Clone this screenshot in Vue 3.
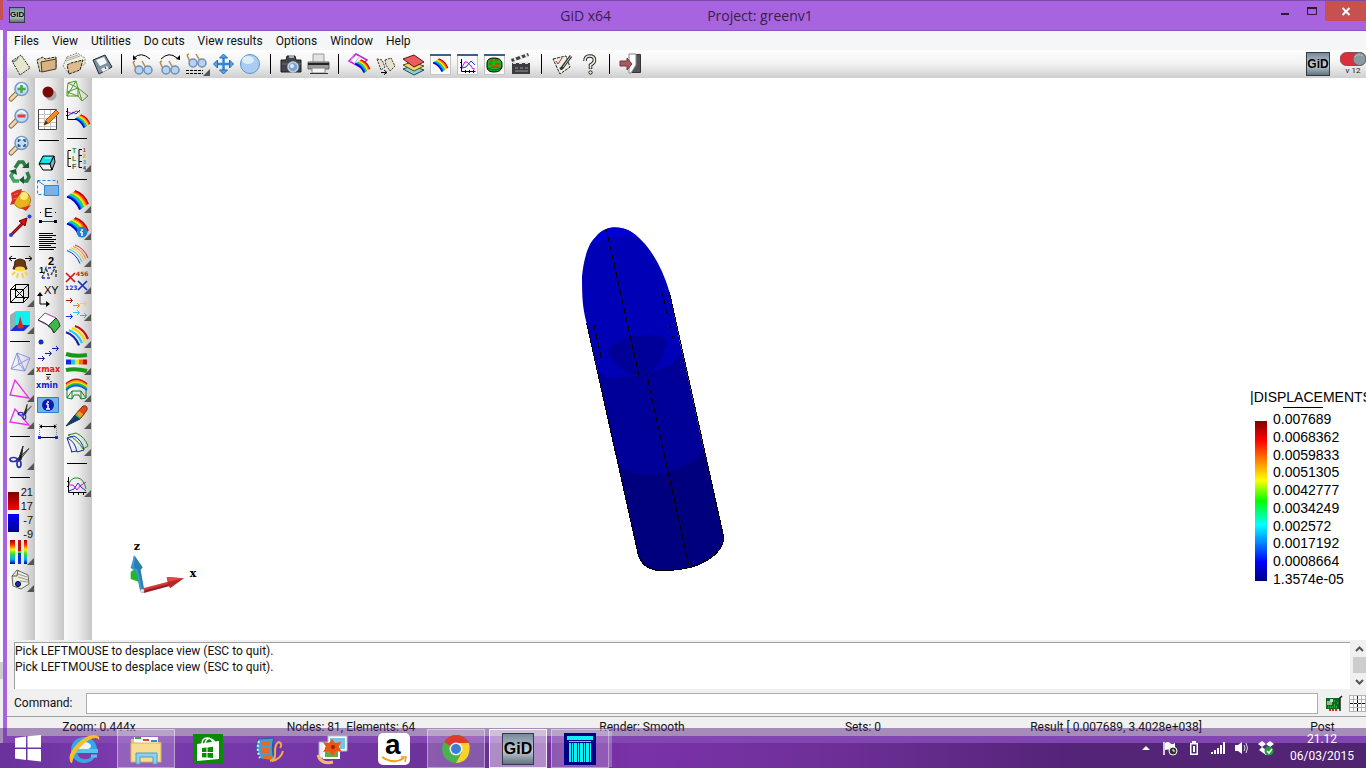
<template>
  <div class="desktop">
    <div class="behind">
      <span class="behind-close"></span>
      <span class="behind-page"></span>
      <span class="behind-scroll"></span>
      <span class="behind-foot"></span>
    </div>

    <main class="window">
      <header class="titlebar">
        <span class="app-icon">GiD</span>
        <h1 class="title"><span>GiD x64</span><span>Project: greenv1</span></h1>
        <div class="controls">
          <button type="button" aria-label="Minimize">
            <svg width="12" height="12"><path d="M2 8h8v2h-8z" fill="#2a1a38" /></svg>
          </button>
          <button type="button" aria-label="Maximize">
            <svg width="12" height="12"><path d="M1.500 3.500h9v6h-9z" fill="none" stroke="#2a1a38" /><path d="M1 2h10v2h-10z" fill="#2a1a38" /></svg>
          </button>
          <button type="button" class="close" aria-label="Close">
            <svg width="12" height="12"><path d="M2.500 3l7 7M9.500 3l-7 7" stroke="#fff" stroke-width="2" /></svg>
          </button>
        </div>
      </header>

      <nav class="menu">
        <a v-for="item in menu" :key="item" href="#">{{ item }}</a>
      </nav>

      <div class="toolbar" role="toolbar" aria-label="Standard">
        <template v-for="(tool, i) in standardTools" :key="i">
          <span v-if="tool === '|'" class="sep-v"></span>
          <button v-else type="button" class="tool" :aria-label="tool.name">
            <svg width="27" height="27" viewBox="0 0 27 27" v-html="tool.art"></svg>
          </button>
        </template>
        <span class="brand">GiD</span>
        <span class="version">
          <svg width="26" height="14" viewBox="0 0 26 14">
            <rect x="0" y="0.500" width="26" height="13" rx="6.500" fill="#dc2f3c" stroke="#8a4a50" />
            <circle cx="19.500" cy="7" r="6.500" fill="#8b989f" stroke="#5d686f" />
            <path d="M15 5q3-4 8-1" stroke="#b9c4ca" fill="none" />
          </svg>
          <small>v 12</small>
        </span>
      </div>

      <section class="workspace">
        <div v-for="(column, c) in sideTools" :key="c" class="side" :class="'side-' + c" role="toolbar">
          <template v-for="(tool, i) in column" :key="i">
            <span v-if="tool === '|'" class="sep-h"></span>
            <div v-else-if="tool === 'range'" class="range">
              <span class="range-bars"><i class="hot"></i><i class="cold"></i></span>
              <span class="range-values"><b>21</b><b>17</b><b>-7</b><b>-9</b></span>
            </div>
            <button v-else type="button" class="tool" :aria-label="tool.name">
              <svg width="27" height="27" viewBox="0 0 27 27" v-html="tool.art"></svg>
            </button>
          </template>
        </div>

        <div class="canvas">
          <svg class="model" width="190" height="370" viewBox="0 0 570 1110" shape-rendering="crispEdges">
            <defs>
              <clipPath id="body">
                <path d="M139 42C158 34 182 36 205 46C260 75 305 150 328 230L365 405L430 700L491 965C492 1010 440 1045 388 1058C340 1068 300 1068 285 1065C255 1058 240 1040 235 1020L175 750L110 455L80 325C68 280 66 250 66 185C70 140 82 90 104 70Q118 50 139 42Z" />
              </clipPath>
            </defs>
            <g clip-path="url(#body)">
              <path d="M0 0h570v1110h-570z" fill="#0000b6" />
              <path d="M90 92Q150 58 235 64L220 0H90z" fill="#0000d2" />
              <path d="M100 455Q130 490 165 490L175 486Q240 486 280 468L330 450Q362 425 366 400L570 500V1110H0V455z" fill="#000098" />
              <path d="M112 455Q140 470 172 490L160 476L205 484Q150 440 100 400z" fill="#0000b6" />
              <path d="M272 470Q300 440 325 430L366 404Q355 435 320 458L330 446z" fill="#0000b6" />
              <path d="M138 408C180 360 260 352 318 368C320 405 305 440 275 468C250 486 215 486 190 468Q155 440 138 408z" fill="#000098" />
              <path d="M170 745C200 782 280 790 330 770C380 750 425 735 430 695L570 700V1110H100z" fill="#00007e" />
            </g>
            <g fill="none" stroke="#000" stroke-width="3">
              <path d="M139 42L237 482M260 478L388 1058" />
              <path d="M100 322L124 430M307 233L320 290" />
              <path d="M320 290L338 370" stroke-dasharray="6 9" />
              <path d="M80 325L235 1020C240 1040 255 1058 285 1065Q340 1070 388 1058C440 1045 492 1010 491 965L328 230" />
            </g>
          </svg>

          <svg class="axes" width="110" height="75" viewBox="0 0 330 225">
            <path d="M62 125l14-8l14 40l-28-10z" fill="#23b52b" />
            <path d="M84 120l10 60" stroke="#2fae3a" stroke-width="7" />
            <path d="M73 76l-11 38l15 6l13 60l12-4l-10-56l6-8z" fill="#2a7fae" />
            <path d="M73 78l-5 38l12 4l14 58" stroke="#3f9fd0" stroke-width="5" fill="none" />
            <path d="M100 183L178 162" stroke="#9a1f22" stroke-width="12" />
            <path d="M100 178L178 158" stroke="#d9383b" stroke-width="7" />
            <path d="M170 141L222 145L180 175L174 162z" fill="#b8282b" />
            <path d="M170 141L222 145L176 155z" fill="#e2474a" />
            <circle cx="97" cy="182" r="6" fill="#e8e8e8" stroke="#555" />
            <text x="71" y="60" class="axis-name">z</text>
            <text x="239" y="140" class="axis-name">x</text>
          </svg>

          <div class="legend">
            <div class="legend-title">|DISPLACEMENTS|</div>
            <div class="legend-body">
              <span class="legend-bar"></span>
              <ul>
                <li v-for="value in legend" :key="value">{{ value }}</li>
              </ul>
            </div>
          </div>
        </div>
      </section>

      <section class="messages">
        <div class="log" role="log">
          <p>Pick LEFTMOUSE to desplace view (ESC to quit).</p>
          <p>Pick LEFTMOUSE to desplace view (ESC to quit).</p>
        </div>
        <div class="scroll">
          <button type="button" aria-label="Scroll up">
            <svg width="9" height="6"><path d="M1 5l3.500-3.500L8 5" fill="none" stroke="#555" stroke-width="2" /></svg>
          </button>
          <span class="thumb"></span>
          <button type="button" aria-label="Scroll down">
            <svg width="9" height="6"><path d="M1 1l3.500 3.500L8 1" fill="none" stroke="#555" stroke-width="2" /></svg>
          </button>
        </div>
      </section>

      <form class="command" @submit.prevent="command = ''">
        <label for="command">Command:</label>
        <input id="command" v-model="command" type="text" autocomplete="off">
        <svg width="17" height="17" viewBox="0 0 17 17">
          <path d="M0 3h14v11h-14z" fill="#0f6a1c" />
          <path d="M1 6h5v4h-5z" fill="#9ab59c" /><path d="M4 4h3v3h-3z" fill="#cfd8d0" />
          <path d="M8 6h2M11 8h2M8 10h2M2 12h10" stroke="#4be05a" stroke-dasharray="1 1" />
          <path d="M3 15h9" stroke="#d22" stroke-width="2" stroke-dasharray="2 1" />
          <path d="M14 2v14M14 3l2-2" stroke="#222" stroke-width="1.500" />
        </svg>
        <svg width="17" height="17" viewBox="0 0 17 17">
          <path d="M0 0h17v17h-17z" fill="#fff" />
          <path d="M0.500 0v17M4.500 0v17M12.500 0v17M16.500 0v17M0 0.500h17M0 4.500h17M0 12.500h17M0 16.500h17" stroke="#b4b4b4" />
          <path d="M8.500 1v15M1 8.500h15" stroke="#111" stroke-dasharray="3 1" />
        </svg>
      </form>

      <footer class="status">
        <span v-for="text in status" :key="text">{{ text }}</span>
      </footer>
    </main>

    <div class="taskbar">
      <button v-for="app in apps" :key="app.name" type="button" class="task" :class="app.state" :aria-label="app.name">
        <span v-if="app.name === 'GiD'" class="gid-icon">GiD</span>
        <svg v-else width="32" height="32" viewBox="0 0 32 32" v-html="app.art"></svg>
      </button>
      <div class="tray">
        <svg v-for="(icon, i) in tray" :key="i" width="16" height="16" viewBox="0 0 16 16" v-html="icon"></svg>
        <time class="clock"><span>21.12</span><span>06/03/2015</span></time>
      </div>
    </div>
  </div>
</template>

<script setup>
import { ref } from 'vue';

const command = ref('');

const menu = ['Files', 'View', 'Utilities', 'Do cuts', 'View results', 'Options', 'Window', 'Help'];
const legend = ['0.007689', '0.0068362', '0.0059833', '0.0051305', '0.0042777', '0.0034249', '0.002572', '0.0017192', '0.0008664', '1.3574e-05'];
const status = ['Zoom: 0.444x', 'Nodes: 81, Elements: 64', 'Render: Smooth', 'Sets: 0', 'Result [ 0.007689, 3.4028e+038]', 'Post'];

// Small corner mark of the tools that open a submenu
const more = '<path d="M20 26h7v-7z" fill="#555"/>';

const tool = (name, art, hasMore = false) => ({ name, art: hasMore ? art + more : art });

// Curved contour bands, from the outer colour to the inner one
const bands = (colors, step, width) => colors.map((color, i) => {
  const d = i * step;
  return `<path d="M${11 - d} ${4 + d * 0.7}q9 3 13 13" fill="none" stroke="${color}" stroke-width="${width}"/>`;
}).join('');
const rainbow = bands(['#c00000', '#ff2a00', '#ff9c00', '#f8f000', '#30d030', '#00c8e8', '#0060ff', '#0000c0'], 1.15, 1.9);
const smallRainbow = (x, y, s) => `<g transform="translate(${x} ${y}) scale(${s})">${rainbow}</g>`;

const lens = (sign) => `<path d="M10 15l-6 6" stroke="#8d6a42" stroke-width="5" stroke-linecap="round"/><path d="M10 15l-6 6" stroke="#f0d7ae" stroke-width="3" stroke-linecap="round"/><circle cx="14.500" cy="11" r="6.500" fill="#c3dcf5" stroke="#6f9ccb" stroke-width="1.500"/><path d="M10.500 9q4-6 8 0" stroke="#eef7ff" stroke-width="2" fill="none"/>${sign}`;

const glasses = '<path d="M4 12l3 7M13 11l4 7M4 12l2-1" stroke="#b58a4c" stroke-width="1.500" fill="none"/><circle cx="10" cy="20" r="4" fill="#b9d3ef" stroke="#6d8fb8" stroke-width="1.500"/><circle cx="19" cy="20" r="4" fill="#b9d3ef" stroke="#6d8fb8" stroke-width="1.500"/>';
const frame = '<path d="M3.500 4.500h20v20h-20z" fill="#fafafa" stroke="#c4c4c4"/><path d="M3 4h21v2h-21z" fill="#3c6288"/>';
const plot = '<path d="M7.500 9v12.500h14M6 12.500h2M6 17.500h2M11.500 20v3M15.500 20v3M19.500 20v3" stroke="#000" fill="none"/><path d="M8 17l3-5h2l4 4l2 3h2" stroke="#e000e0" fill="none"/><path d="M8 18l4-1l5-6l4 4" stroke="#2038e0" fill="none"/>';
const scissors = '<path d="M10 15L22 4.500L12 17z" fill="#999" stroke="#444"/><path d="M11 17L16 2L14 16z" fill="#222" stroke="#222"/><ellipse cx="6.500" cy="15.500" rx="3.500" ry="2" fill="none" stroke="#3030a8" stroke-width="1.700"/><ellipse cx="12" cy="20" rx="2" ry="3.300" fill="none" stroke="#3030a8" stroke-width="1.700"/>';

const standardTools = [
  tool('New', '<path d="M5 11l9-6l9 13l-10 7z" fill="#e6e6cc" stroke="#222" stroke-dasharray="2 1"/><path d="M5 11q4 2 6-4" stroke="#555" fill="none"/>'),
  tool('Open', '<path d="M3 10l6-3l2 2l11-2v11l-16 4z" fill="#e0d6b0" stroke="#222" stroke-dasharray="3 1"/><path d="M7 12l15-3v10l-14 3z" fill="#d8b483" stroke="#4b3920"/>'),
  tool('Import', '<path d="M6 7l10-4l8 5v6l-16 10l-6-8z" fill="#f2f2e0" stroke="#888" stroke-dasharray="2 1"/><path d="M5 9l12-4M5 11l14-5" stroke="#aaa"/><path d="M6 15l4-2l12-3l-3 10l-11 4z" fill="#dcbb8c" stroke="#222" stroke-dasharray="3 1"/>'),
  tool('Save', '<path d="M5 10l12-5l7 12l-13 7z" fill="#7d929f" stroke="#1e2830"/><path d="M8 10l8-3l3 6l-7 3z" fill="#f8fbfc"/><path d="M13 19l6-3l2 3l-6 3z" fill="#eef3f5"/><path d="M17 17l1 2" stroke="#222"/>'),
  '|',
  tool('Previous view', glasses + '<path d="M5 8q7-7 16 1" stroke="#000" fill="none"/><path d="M4 10v-5l4 4z"/>'),
  tool('Next view', glasses + '<path d="M5 9q8-8 16-1" stroke="#000" fill="none"/><path d="M24 10v-5l-4 4z"/>'),
  tool('View list', '<g transform="translate(0 -7)">' + glasses + '</g><path d="M3 20.500h17M3 23.500h17" stroke="#000" stroke-dasharray="3 1"/>', true),
  tool('Pan', '<path d="M13.500 6v16M5 14h17" stroke="#2f86dc" stroke-width="2.500"/><path d="M9.500 8l4-4l4 4zM9.500 20l4 4l4-4zM7.500 10l-4 4l4 4zM19.500 10l4 4l-4 4z" fill="#57a4ea" stroke="#1d6cbb"/>'),
  tool('Sphere', '<circle cx="13" cy="14" r="9.500" fill="#a9cdf2" stroke="#6093c8"/><ellipse cx="11" cy="10" rx="6" ry="4" fill="#dcecfb"/>'),
  '|',
  tool('Snapshot', '<path d="M3 10h5l1-4h8l1 4h5v12h-20z" fill="#42464c" stroke="#1b1d20"/><path d="M11 5h5v3h-5z" fill="#a8adb2"/><path d="M4 14h19" stroke="#6c7278"/><circle cx="15" cy="17" r="5" fill="#7aa5d4" stroke="#c8d2dc" stroke-width="1.500"/><circle cx="14" cy="16" r="2" fill="#d8ebff"/>'),
  tool('Print', '<path d="M8 4h11v9h-11z" fill="#e2e2e2" stroke="#999"/><path d="M3 12h21v7h-21z" fill="#9a9a9a" stroke="#666"/><path d="M3 14h21" stroke="#222" stroke-width="2"/><path d="M7 18h13v5h-13z" fill="#f5f5f5" stroke="#888"/><path d="M5 23.500h18" stroke="#333"/>'),
  '|',
  tool('Postprocess', '<path d="M3 11l7-7l11 6l-7 7z" fill="#fff" stroke="#c020d0" stroke-width="1.500"/><path d="M8 4l-4 8M14 6l-6 8" stroke="#f080e0"/>' + smallRainbow(7, 7, 0.7)),
  tool('Sets', '<path d="M4 9l5 1l3 7l-4 3zM12 10l6-2l4 8l-5 5l-4-6z" fill="#e6e0cc" stroke="#333" stroke-dasharray="2 1"/><path d="M8 22.500h5M11 20l3 2.500l-3 2" stroke="#000" fill="none"/>'),
  tool('Layers', '<path d="M3 19l9-3l12 4l-10 5z" fill="#7fd6e2" stroke="#174a52"/><path d="M3 15l9-3l12 4l-10 5z" fill="#f2d36a" stroke="#5b4a10"/><path d="M3 9l11-4l10 7l-10 5z" fill="#ea5c60" stroke="#5c1416"/>'),
  tool('Results window', frame + smallRainbow(4, 6, 0.7)),
  tool('Graphs window', frame + plot),
  tool('Contour window', frame + '<path d="M6 13q0-5 7-5t8 5v4q-1 5-8 5t-7-5z" fill="#18b818" stroke="#000"/><path d="M9 11h3M14 10h3M8 14h3M14 14h5M10 17h8" stroke="#c83800" stroke-width="1.500"/><path d="M7 18q7 4 13 0" stroke="#053" fill="none"/>'),
  tool('Animate', '<path d="M4 13h18v11h-18z" fill="#3b3b40"/><path d="M3 9l17-6l1 3l-17 6z" fill="#404046"/><path d="M6 7l2 4M12 5l2 4M17 3l2 4" stroke="#eee" stroke-width="2"/><path d="M5 13h17" stroke="#ddd" stroke-width="2" stroke-dasharray="3 3"/><path d="M7 18h3M12 18h3M17 18h3M7 21h13" stroke="#999"/>'),
  '|',
  tool('Preferences', '<path d="M4 9l13-3l4 11l-10 7z" fill="#efefe6" stroke="#222" stroke-dasharray="3 1"/><path d="M7 11l2 3l4-6" stroke="#b03030" fill="none"/><path d="M22 6l-9 12l-2 1" stroke="#333" stroke-width="3" fill="none"/><path d="M22 6l-8 11" stroke="#d8cdb8"/>'),
  tool('Help', '<path d="M9 11q0-5 4.500-5q5 0 5 4q0 3-4 5v4" stroke="#222" stroke-width="3.500" fill="none"/><path d="M9 11q0-5 4.500-5q5 0 5 4q0 3-4 5v3.500" stroke="#ecefdc" stroke-width="1.700" fill="none"/><circle cx="14.500" cy="22.500" r="1.700" fill="#ecefdc" stroke="#222"/>'),
  '|',
  tool('Exit', '<path d="M12.500 4.500h11v18h-11z" fill="#555" stroke="#333"/><path d="M12 4h7v11l-5 8h-2z" fill="#fff" stroke="#888"/><path d="M3 11h7v-3l5 6l-5 6v-4h-7z" fill="#a85a5e" stroke="#6d3a3d"/>'),
];

const sideTools = [
  [
    tool('Zoom in', lens('<path d="M10.500 11h8M14.500 7v8" stroke="#4aa54a" stroke-width="2.500"/>')),
    tool('Zoom out', lens('<path d="M10.500 11h8" stroke="#e03c3c" stroke-width="3"/>')),
    tool('Zoom frame', lens('<path d="M11.500 10v-2h2M16 8h2v2M18 12v2h-2M13.500 14h-2v-2" stroke="#2c4c74" stroke-width="1.500" fill="none"/>')),
    tool('Redraw', '<path d="M8 9l4-6h4l3 5" fill="none" stroke="#2f7d4a" stroke-width="3.500"/><path d="M15 9h7v-6z" fill="#1c5a32"/><path d="M6 13l-2 4l3 5h5" fill="none" stroke="#46a366" stroke-width="3.500"/><path d="M2 12l7-2l1 6z" fill="#1c5a32"/><path d="M20 13l2 5l-2 4h-4" fill="none" stroke="#2f7d4a" stroke-width="3.500"/><path d="M17 17v8l-5-4z" fill="#1c5a32"/>'),
    tool('Render', '<circle cx="15" cy="14" r="8.500" fill="#e8b41e" stroke="#a8790d"/><circle cx="17" cy="10" r="4" fill="#fae97a"/><path d="M4 7l6-3l5-1l-1 4l-3 4l-2 3l-2 4l-4 1l2-5z" fill="#d83020"/><path d="M14 22l10-3l-5 6z" fill="#d83020"/><path d="M7 9l4-2M6 13l4-1" stroke="#f07050"/>'),
    tool('Rotate', '<path d="M4 22L18 8" stroke="#8b0000" stroke-width="3"/><path d="M4 22L18 8" stroke="#e01818"/><path d="M12 8l8-3l-2 8z" fill="#d81010" stroke="#700"/><circle cx="4" cy="22" r="2" fill="#2040e0"/><circle cx="22.500" cy="3.500" r="2" fill="#2040e0"/>'),
    '|',
    tool('Light', '<path d="M2 4.500h7M18 4.500h6M5 2l-3 2.500l3 2.500M22 2l3 2.500l-3 2.500" stroke="#000" fill="none"/><path d="M6 15q2-4 2-8q5-4 10 0q0 4 2 8z" fill="#6b3a14" stroke="#3d1f08"/><ellipse cx="13" cy="15" rx="5" ry="2.500" fill="#ffd84c"/><path d="M8 18l-3 3M11 19l-1 5M15 19l1 5M18 18l3 3" stroke="#f2d24a" stroke-width="2"/>'),
    tool('Perspective', '<path d="M3.500 8.500h13v13h-13zM8.500 3.500h13v13h-13zM3.500 8.500l5-5M16.500 8.500l5-5M3.500 21.500l5-5M16.500 21.500l5-5M7 7l11 11M18 7L7 18" fill="none" stroke="#000"/>', true),
    tool('Clip planes', '<path d="M9 3h14v14h-14z" fill="#14f0f0"/><path d="M3 7l6-4v14l-6 6z" fill="#8fb4b8"/><path d="M3 23l6-6h14l-6 6z" fill="#1b2fe0"/><path d="M13 8l2 7l2 4q-3 3-7 0l2-5z" fill="#e02020"/>', true),
    '|',
    tool('Volume mesh', '<path d="M10 4L4 20L18 22L23 9ZM10 4L18 22M4 20L12 15L23 9M10 4L12 15L18 22" fill="none" stroke="#8d94e4"/>', true),
    tool('Surface mesh', '<path d="M8 4L3 19L22 22z" fill="none" stroke="#f02ce8" stroke-width="1.300"/>', true),
    tool('Cut mesh', '<path d="M8 6L3 19L22 22z" fill="none" stroke="#f02ce8" stroke-width="1.300"/><g transform="translate(9 0) scale(0.7)">' + scissors + '</g>', true),
    '|',
    tool('Cut', scissors, true),
    '|',
    'range',
    tool('Colour scale', '<defs><linearGradient id="jet" x1="0" x2="0" y1="0" y2="1"><stop offset="0" stop-color="#a00000"/><stop offset=".2" stop-color="#ff3000"/><stop offset=".4" stop-color="#f8f000"/><stop offset=".6" stop-color="#20e040"/><stop offset=".8" stop-color="#00b0ff"/><stop offset="1" stop-color="#0000b0"/></linearGradient></defs><path d="M3 1h5v24h-5zM17 1h3v24h-3z" fill="url(#jet)"/><path d="M11 1h3v11h-3z" fill="#c01000"/><path d="M11 12h3v2h-3z" fill="#20e040"/><path d="M11 14h3v11h-3z" fill="#0030d0"/>', true),
    tool('Notes', '<path d="M5 10l5-6l11 5l1 9l-8 5l-8-3z" fill="#eeeedc" stroke="#666"/><path d="M11 8l9 3M11 11l10 3M13 15l8 1" stroke="#999"/><path d="M5 10l5 0l1-6" fill="none" stroke="#555"/><circle cx="11" cy="18" r="2.500" fill="#1030e0" stroke="#000"/>', true),
  ],
  [
    tool('Record', '<circle cx="15" cy="15" r="5.500" fill="#aaa"/><circle cx="12" cy="12" r="5.500" fill="#760808"/>'),
    tool('Edit table', '<path d="M2.500 2.500h18v20h-18z" fill="#fff" stroke="#444"/><path d="M3 7.500h17M3 11.500h17M3 15.500h17M3 19.500h17M8.500 3v19M14.500 3v19" stroke="#c4c4c4"/><path d="M8 18l2-5L20 3l3 3L13 16z" fill="#f08c24" stroke="#a65a10"/><path d="M8 18l2-4l2 2z" fill="#222"/>'),
    '|',
    tool('Erase', '<path d="M7 8h11l-4 8h-11z" fill="#16e0ec" stroke="#000"/><path d="M3 16l4 6h9l-2-6z" fill="#e8f4f4" stroke="#000"/><path d="M14 16l4-8l1 6l-3 8z" fill="#8ab0b4" stroke="#000"/><path d="M9 10h6" stroke="#9ff"/>'),
    tool('Select area', '<path d="M1.500 5.500h20v14h-20z" fill="none" stroke="#2f86d6" stroke-dasharray="3 2"/><path d="M8.500 10.500h14v10h-14z" fill="#7ab2e4" stroke="#2f86d6"/><path d="M2 6l6 4" stroke="#2f86d6"/>'),
    tool('Label element', '<text x="8" y="15" font-family="Liberation Sans" font-size="13">E</text><path d="M4 19.500h16" stroke="#1430e0"/><path d="M3 18h3v3h-3zM18 18h3v3h-3zM4 10h1v1h-1zM19 10h1v1h-1z"/>'),
    tool('List', '<path d="M3 4.500h14M3 6.500h17M3 8.500h13M3 10.500h17M3 12.500h15M3 14.500h17M3 16.500h12M3 18.500h17M3 20.500h15" stroke="#000"/>'),
    tool('Node numbers', '<text x="12" y="9" font-family="Liberation Sans" font-weight="bold" font-size="11">2</text><text x="3" y="17" font-family="Liberation Sans" font-weight="bold" font-size="9">1</text><path d="M6 22l4-10l3 9M15 19l4-7M20 21v-8" stroke="#444" fill="none" stroke-dasharray="3 1" stroke-width="1.500"/><path d="M6 22h8M12 12l9-1" stroke="#1430e0" stroke-dasharray="3 2" stroke-width="1.500"/>'),
    tool('Coordinates', '<text x="8" y="11" font-family="Liberation Sans" font-size="11">XY</text><path d="M4 12v9h8" stroke="#000" fill="none"/><path d="M1 13l3-4l3 4zM10 18l4 3l-4 3z"/>'),
    tool('Surface', '<path d="M2 10L9 3l11 5l-7 8z" fill="#fff" stroke="#c020c0"/><path d="M12 16l8-8q3 3 4 8l-6 7q-2-6-6-7z" fill="#38b848" stroke="#333"/><path d="M2 10q8 3 11 6q3 3 5 7" stroke="#333" fill="none"/>'),
    tool('Send to point', '<circle cx="5" cy="5" r="2.500" fill="#1430c0"/><path d="M2 21.500h6M6 19l2.500 2.500l-2.500 2.500M9 16.500h6M13 14l2.500 2.500l-2.500 2.500M16 11.500h6M20 9l2.500 2.500l-2.500 2.500" stroke="#102090" fill="none"/>'),
    tool('Extremes', '<g font-family="DejaVu Sans" font-size="8" font-weight="bold"><text x="0" y="8" fill="#e01818">xmax</text><text x="10" y="16" font-size="7" font-weight="normal">x</text><text x="0" y="24" fill="#1420d0">xmin</text></g><path d="M10 10.500h5" stroke="#000"/>'),
    tool('Information', '<path d="M1.500 6.500h21v15h-21z" fill="#74b0ea" stroke="#2e7fd0"/><circle cx="12" cy="14" r="6" fill="#0c1cb0"/><path d="M12 10v2M12 13v5M10 18h4M10 13h2" stroke="#fff" stroke-width="1.500"/>'),
    tool('Distance', '<path d="M3 8.500h18" stroke="#000"/><path d="M3 8.500l3-2v4zM21 8.500l-3-2v4z"/><path d="M3 19.500h18" stroke="#000"/><path d="M2 18h3v3h-3zM19 18h3v3h-3z" fill="#1430c0"/><path d="M3.500 6v12M20.500 6v12" stroke="#888" stroke-dasharray="1 1"/>'),
  ],
  [
    tool('Mesh', '<path d="M3 14L4 5L12 3L14 10L24 18L18 23L14 18L3 18ZM3 14L14 10L14 18ZM4 5L14 10M3 18L12 3M14 10L18 23" fill="none" stroke="#4f9a28"/>'),
    tool('Result graph', '<path d="M3.500 3v11.500h10M2 6.500h2M2 10.500h2" stroke="#000" fill="none"/><path d="M4 7l4 2l4-3l4 1" stroke="#e000c0" fill="none"/><path d="M4 11l5-4l3 2l4-4" stroke="#2030d0" fill="none"/>' + smallRainbow(9, 7, 0.7)),
    '|',
    tool('Labels tree', '<path d="M7 4.500h-3v16h3M4 12.500h3M18 3.500h-3v18h3M15 9.500h3M15 15.500h3" stroke="#000" fill="none"/><g font-family="Liberation Sans" font-weight="bold" font-size="7"><text x="8" y="7" fill="#20a020">T</text><text x="8" y="15" fill="#20a020">L</text><text x="8" y="23" fill="#555">F</text></g><g font-family="Liberation Sans" font-weight="bold" font-size="5"><text x="19" y="6" fill="#b02020">1</text><text x="19" y="12" fill="#c8a010">2</text><text x="19" y="18" fill="#10a8c8">3</text><text x="19" y="24" fill="#1020a0">4</text></g>', true),
    '|',
    tool('Contour fill', rainbow, true),
    tool('Contour info', rainbow + '<circle cx="18" cy="18" r="5.500" fill="#2080d8"/><path d="M18 15v2M18 18v4M16 18h2" stroke="#fff" stroke-width="1.500"/>', true),
    tool('Contour lines', bands(['#d02020', '#f08020', '#f0c020', '#30c0e0', '#2030c0'], 2, 1), true),
    tool('Min and max', '<path d="M2 5l9 9M11 5l-9 9" stroke="#d01818" stroke-width="1.700"/><path d="M14 13l9 9M23 13l-9 9" stroke="#1830c8" stroke-width="1.700"/><g font-family="DejaVu Sans" font-size="6" font-weight="bold"><text x="12" y="8" fill="#d01818">456</text><text x="1" y="22" fill="#1830c8">123</text></g>', true),
    tool('Vectors', '<g fill="none"><path d="M2 5.500h6M6 3l2.500 2.500l-2.500 2.500" stroke="#901818"/><path d="M9 10.500h6M13 8l2.500 2.500l-2.500 2.500" stroke="#f08010"/><path d="M16 8.500h7M20 6l2.500 2.500l-2.500 2.500" stroke="#f0d820"/><path d="M2 21.500h6M6 19l2.500 2.500l-2.500 2.500" stroke="#1830c8"/><path d="M9 17.500h6M13 15l2.500 2.500l-2.500 2.500" stroke="#18d0f0"/><path d="M16 20.500h7M20 18l2.500 2.500l-2.500 2.500" stroke="#20e020"/></g>', true),
    tool('Isosurfaces', bands(['#c01010', '#ffd800', '#20c8f0', '#1020a0'], 3, 2.2), true),
    tool('Stream lines', '<path d="M2 5q10 3 21 1M2 21q10-2 21 1" stroke="#189818" stroke-width="4" fill="none"/><path d="M2 13h5" stroke="#1028e0" stroke-width="5"/><path d="M7 13h4" stroke="#20c8f0" stroke-width="5"/><path d="M11 13h4" stroke="#f0e020" stroke-width="5"/><path d="M15 13h4" stroke="#f07010" stroke-width="5"/><path d="M19 13h4" stroke="#c01010" stroke-width="5"/>', true),
    tool('Deformation', '<g fill="none" stroke-width="1.700"><path d="M2 8q10-9 21 0" stroke="#d01010"/><path d="M2 9.500q10-9 21 0" stroke="#f89010"/><path d="M2 11q10-9 21 0" stroke="#e8e010"/><path d="M2 12.500q10-9 21 0" stroke="#20c840"/><path d="M2 14q10-9 21 0" stroke="#1060f0"/></g><path d="M3 14v8l5 1l2-4h5l2 4l5-1v-8M3 22l5-7h9l5 7M8 15v8M17 15v8" stroke="#108020" fill="none"/>', true),
    tool('Line diagram', '<path d="M2 23L11 12l5 4z" fill="#183a70" stroke="#103050"/><path d="M11 12l5-5l5 4l-5 5z" fill="#38c040"/><path d="M13 9l6-6q5-1 4 4l-4 6z" fill="#e84818"/><path d="M12 11l3-3l5 4l-3 3z" fill="#e8a020"/><path d="M11 12l8-9q5-1 4 4l-7 9" fill="none" stroke="#7a3010"/>', true),
    tool('Results surface', '<path d="M4 5l8-2q9 4 12 13l-5 3q-5-9-15-14z" fill="none" stroke="#189018"/><path d="M3 8q8 3 10 14l7-2q-2-10-10-14zM7 22l6-1M3 8l5 14" fill="none" stroke="#1828b0"/>', true),
    '|',
    tool('Graphs', '<path d="M4.500 6v15.500h18M3 10.500h2M3 15.500h2M9.500 21v3M14.500 21v3M19.500 21v3" stroke="#000" fill="none"/><path d="M5 13q2-7 9-6q6 1 8 11" stroke="#189018" fill="none"/><path d="M5 14h4l4 5l3-4l6-4" stroke="#e000d0" fill="none"/><path d="M5 20l5-2l4-6l3 4l5 4" stroke="#2030e0" fill="none"/>', true),
  ],
];

const apps = [
  { name: 'Start', state: 'start', art: '<path d="M3 5l11-1.500v11H3zM15.500 3.200L29 2v12.500H15.500zM3 16h11v11L3 25.500zM15.500 16H29v12.500l-13.500-1.500z" fill="#fff"/>' },
  { name: 'Internet Explorer', art: '<ellipse cx="16" cy="17" rx="13" ry="13" fill="#36a7e6"/><ellipse cx="16" cy="13" rx="7" ry="4" fill="#e8f6ff"/><path d="M9 19h22q0 3-1 5h-7q-3 3-8 2q-5-1-6-7z" fill="#7a3fa5"/><path d="M8 18h22" stroke="#54c4f4" stroke-width="4"/><path d="M23 23h6" stroke="#54c4f4" stroke-width="3"/><path d="M3 30Q-2 22 10 10Q22-1 30 3q2 1 1 4q-2-4-10 0Q7 15 4 30z" fill="#f4bf28"/>' },
  { name: 'File Explorer', state: 'open', art: '<path d="M1 6h10l2 3h18v20h-30z" fill="#e4c468"/><path d="M4 4h24v12h-24z" fill="#fff"/><path d="M5 4h6v2h-6z" fill="#38a838"/><path d="M13 6h6v2h-6z" fill="#d84838"/><path d="M21 7h6v2h-6z" fill="#3888d8"/><path d="M1 10h30v19h-30z" fill="#f6dd91" stroke="#d8b760"/><path d="M6 31v-11h21v11h-4v-7h-13v7z" fill="#8ed0ee" stroke="#4f9ec8"/>' },
  { name: 'Store', art: '<path d="M1 1h30v30h-30z" fill="#0a8a06"/><path d="M5 11l22-3v18l-22 2z" fill="#fff"/><path d="M10 11q0-6 5-6q5 0 6 5M13 10q2-7 8-3l2 2" stroke="#fff" stroke-width="1.500" fill="none"/><path d="M10 15l4.500-.5v4.500h-4.500zM15.500 14.400l5.500-.6v5.200h-5.500zM10 20h4.500v4.500l-4.500-.3zM15.500 20h5.500v5l-5.500-.4z" fill="#0a8a06"/>' },
  { name: 'Movie Maker', art: '<path d="M4 6l16-1q-4 11 1 23l-14-2q-7-10-3-20z" fill="#4b9ad8" stroke="#235d94"/><path d="M8 8h8v5h-8zM7 15h8v5h-8zM9 22h8v4h-8z" fill="#e86a1e"/><path d="M5 8q-3 8 1 17" stroke="#d8efff" stroke-width="2" stroke-dasharray="2 2" fill="none"/><path d="M16 28q6-1 5-9q0-9 4-10q4 2 1 6M18 28q9-2 11-10" fill="none" stroke="#f3aa4c" stroke-width="2"/>' },
  { name: 'Photo Gallery', art: '<path d="M3 9h18v16h-18z" fill="#e8f0f4" stroke="#aab"/><path d="M12 3h19v15h-19z" fill="#fff" stroke="#bbc"/><path d="M14 5h15v11h-15z" fill="#77c3e6"/><path d="M7 12h17v14h-17z" fill="#fff"/><path d="M9 14h13v10h-13z" fill="#66aa50"/><path d="M16 6l3 4l6-1l-2 5l3 5l-6-1l-3 5l-4-5l-6 1l3-5l-3-5l6 1z" fill="#ee5510"/><circle cx="17" cy="14" r="2" fill="#8a2a00"/><path d="M2 22q3 10 15 7" stroke="#f3bb65" stroke-width="3" fill="none"/>' },
  { name: 'Amazon', art: '<rect x="0" y="0" width="32" height="32" rx="5" fill="#fff"/><text x="7" y="21" font-family="Liberation Sans" font-size="28" font-weight="bold">a</text><path d="M4 24q12 8 22 1" stroke="#f59a16" stroke-width="2" fill="none"/><path d="M23 24h5l-1 5" stroke="#f59a16" stroke-width="1.500" fill="none"/>' },
  { name: 'Chrome', state: 'open', art: '<circle cx="16" cy="16" r="14" fill="#4caf50"/><path d="M16 16L4 9Q8 2 16 2Q25 2 29 10H16z" fill="#e0382c"/><path d="M16 30Q30 29 29.500 13Q29 11 28.500 10H16L22 19z" fill="#fcd12c"/><circle cx="16" cy="16" r="6.500" fill="#f4f4f4"/><circle cx="16" cy="16" r="5" fill="#3a7fd4"/>' },
  { name: 'GiD', state: 'open active' },
  { name: 'Columns', state: 'open stacked', art: '<path d="M0 0h32v32h-32z" fill="#000084"/><path d="M3 3h26v4h-26zM5 8h22v1h-22zM5 10h2v19h-2zM8 10h1v19h-1zM10 10h3v19h-3zM14 10h1v19h-1zM16 10h3v19h-3zM20 10h1v19h-1zM22 10h3v19h-3zM26 10h1v19h-1z" fill="#10f0f4"/>' },
];

const tray = [
  '<path d="M4 10l4-4l4 4z" fill="#fff"/>',
  '<path d="M2 2v13" stroke="#fff" stroke-width="1.500"/><path d="M3 3q3-2 5 0t5 0v7q-3 1-5 0t-5 0z" fill="#fff"/><circle cx="11" cy="11" r="4" fill="#333" stroke="#fff"/><path d="M11 9v2h2" stroke="#fff" fill="none"/>',
  '<path d="M6 1h4v2h2v12h-8v-12h2z" fill="#fff"/><path d="M5.500 4.500h5v9h-5z" fill="#4a2468"/><path d="M7 6h2v6h-2z" fill="#fff"/>',
  '<path d="M1 12h2v2h-2zM4 10h2v4h-2zM7 8h2v6h-2zM10 5h2v9h-2zM13 2h2v12h-2z" fill="#fff"/>',
  '<path d="M1 5h3l4-3v12l-4-3h-3z" fill="#fff"/><path d="M10 5q2 3 0 6M12 3q3 5 0 10" stroke="#ddd" fill="none"/>',
  '<path d="M4 1l4 3l4-3l4 3l-4 3l3 3l-7 5l-7-5l3-3l-4-3z" fill="#fff"/><path d="M8 4l4 3l-4 3l-4-3z" fill="#5a2c80"/><circle cx="11" cy="11" r="4.500" fill="#1c9c3c"/><path d="M9 11l2 2l3-4" stroke="#fff" stroke-width="1.500" fill="none"/>',
];
</script>

<style>
html,
body {
  height: 100%;
  overflow: hidden;
}
</style>

<style scoped>
.desktop {
  position: relative;
  box-sizing: border-box;
  display: flex;
  height: 100vh;
  min-height: 700px;
  padding-bottom: 25px;
  overflow: hidden;
  background: linear-gradient(90deg, #7a3cb4 0, #9a4cd8 8%, #8c44c8 25%, #7a38a8 35%, #9a3cd0 47%, #8438b0 60%, #502070 78%, #482060 100%);
  font-family: 'Segoe UI', Roboto, sans-serif;
  font-size: 12px;
  color: #111;
}

button {
  padding: 0;
  border: 0;
  background: none;
  font: inherit;
}

svg {
  display: block;
}

/* Sliver of the window that lies behind */
.behind {
  display: flex;
  flex-direction: column;
  width: 3px;
  background: #a864e0;
}

.behind-close {
  height: 20px;
  margin-bottom: 10px;
  background: #c75050;
}

.behind-page {
  flex: 1;
  background: #fafafa;
}

.behind-scroll {
  height: 17px;
  background: #cdcdcd;
}

.behind-foot {
  height: 64px;
  background: #f0f0f0;
}

.window {
  flex: 1;
  display: flex;
  flex-direction: column;
  min-width: 0;
  border: solid #a864e0;
  border-width: 0 0 7px 4px;
  background: #f0f0f0;
}

/* Title bar */
.titlebar {
  display: grid;
  grid-template-columns: 1fr auto 1fr;
  box-sizing: border-box;
  height: 31px;
  border-top: 1px solid #7b4bab;
  border-bottom: 1px solid #8d52c4;
  background: #a864e0;
}

.app-icon,
.brand,
.gid-icon {
  box-sizing: border-box;
  border: 1px solid #333c44;
  background: linear-gradient(#76889a, #c3ced6 55%, #63727e);
  color: #000;
  font-family: 'Liberation Sans', sans-serif;
  font-weight: bold;
  text-align: center;
}

.app-icon {
  width: 16px;
  height: 16px;
  margin: 6px 0 0 2px;
  font-size: 8px;
  line-height: 14px;
}

.title {
  display: flex;
  gap: 96px;
  margin: 0;
  color: #37204c;
  font-family: 'Segoe UI', 'Open Sans', sans-serif;
  font-size: 14px;
  font-weight: normal;
  line-height: 29px;
}

.controls {
  display: flex;
  justify-content: flex-end;
  height: 20px;
}

.controls button {
  display: grid;
  place-items: center;
  width: 27px;
}

.controls .close {
  width: 41px;
  background: #c75050;
}

/* Menu and main toolbar */
.menu {
  display: flex;
  gap: 13px;
  height: 19px;
  padding-left: 7px;
  background: #f5f6f7;
  line-height: 20px;
}

.menu a {
  color: #111;
  text-decoration: none;
}

.toolbar {
  display: flex;
  height: 28px;
  background: linear-gradient(#fff, #f2f2f2 50%, #cfcfcf);
}

.tool {
  width: 27px;
  height: 27px;
}

.sep-v {
  width: 1px;
  height: 20px;
  margin: 4px 7px 4px 6px;
  background: #000;
}

.brand {
  width: 24px;
  height: 24px;
  margin: 2px 10px 0 auto;
  font-size: 12px;
  line-height: 22px;
}

.version {
  width: 26px;
  padding-top: 2px;
  text-align: center;
}

.version small {
  display: block;
  font-size: 8px;
  line-height: 10px;
}

/* Side toolbars and drawing area */
.workspace {
  flex: 1;
  display: flex;
  min-height: 0;
}

.side {
  display: flex;
  flex-direction: column;
  width: 28px;
  background: linear-gradient(90deg, #fafafa, #ececec 50%, #c6c6c6);
}

.side-1 {
  box-sizing: border-box;
  width: 29px;
  padding: 2px 0 0 1px;
}

.sep-h {
  width: 20px;
  height: 1px;
  margin: 6px 3px 7px;
  background: #000;
}

.range {
  display: flex;
  justify-content: space-between;
  height: 54px;
  padding: 0 2px 0 1px;
}

.range-bars i {
  display: block;
  width: 11px;
  height: 18px;
  margin-top: 4px;
}

.range-bars .hot {
  margin-top: 7px;
  background: linear-gradient(#780000, #ff0000);
}

.range-bars .cold {
  background: linear-gradient(#0000ff, #000090);
}

.range-values b {
  display: block;
  font-family: 'Liberation Sans', sans-serif;
  font-size: 11px;
  font-weight: normal;
  line-height: 14px;
  text-align: right;
}

.canvas {
  position: relative;
  flex: 1;
  overflow: hidden;
  background: #fff;
}

.model {
  position: absolute;
  left: 468px;
  top: 137px;
}

.axes {
  position: absolute;
  left: 18px;
  bottom: 35px;
}

.axis-name {
  font-family: 'DejaVu Serif', serif;
  font-size: 33px;
  font-weight: bold;
}

.legend {
  position: absolute;
  top: 311px;
  right: 0;
  width: 116px;
  overflow: hidden;
  color: #000;
  font-family: 'Liberation Sans', Arial, sans-serif;
  font-size: 14px;
  white-space: nowrap;
}

.legend-title {
  line-height: 17px;
}

.legend-title::after {
  content: '';
  display: block;
  width: 40px;
  height: 1px;
  margin: 1px 0 3px 33px;
  background: #000;
}

.legend-body {
  display: flex;
  gap: 6px;
  padding-left: 5px;
}

.legend-bar {
  width: 12px;
  height: 160px;
  margin-top: 10px;
  background: linear-gradient(#800000, #ff0000 12%, #ffff00 37%, #00ff00 50%, #00ffff 65%, #0000ff 88%, #000080);
}

.legend ul {
  display: flex;
  flex-direction: column;
  justify-content: space-between;
  height: 177px;
  margin: 0;
  padding: 0;
  line-height: 17px;
  list-style: none;
}

/* Messages, command line, status */
.messages {
  display: flex;
  height: 50px;
}

.log {
  flex: 1;
  box-sizing: border-box;
  height: 47px;
  margin: 2px 3px 0 7px;
  border: solid #a0a0a0;
  border-width: 1px 0 0 1px;
  background: #fff;
}

.log p {
  margin: 0;
  line-height: 16px;
}

.scroll {
  display: flex;
  flex-direction: column;
  justify-content: space-between;
  width: 13px;
}

.scroll button {
  display: grid;
  place-items: center;
  height: 17px;
}

.thumb {
  height: 16px;
  background: #cdcdcd;
}

.command {
  display: flex;
  align-items: center;
  height: 26px;
  border-bottom: 1px solid #a0a0a0;
}

.command label {
  box-sizing: border-box;
  width: 79px;
  padding-left: 7px;
}

.command input {
  flex: 1;
  box-sizing: border-box;
  height: 21px;
  padding: 0 4px;
  border: 1px solid #abadb3;
  background: #fff;
  font: inherit;
}

.command svg {
  margin-left: 8px;
}

.command svg + svg {
  margin-left: 6px;
}

.status {
  display: grid;
  grid-template-columns: 184fr 320fr 262fr 180fr 326fr 87fr;
  height: 19px;
  line-height: 20px;
  text-align: center;
}

/* Taskbar lies over the bottom edge of the window */
.taskbar {
  position: absolute;
  right: 0;
  bottom: 0;
  left: 0;
  display: flex;
  gap: 4px;
  height: 40px;
  background: rgba(90, 40, 130, 0.5);
}

.task {
  box-sizing: border-box;
  display: grid;
  place-items: center;
  width: 58px;
  height: 39px;
  margin-top: 1px;
}

.task.start {
  width: 51px;
  padding-left: 4px;
}

.task.open {
  border: 1px solid rgba(255, 255, 255, 0.4);
  background: rgba(255, 255, 255, 0.2);
}

.task.active {
  border-color: rgba(255, 255, 255, 0.8);
  background: rgba(255, 255, 255, 0.45);
}

.task.stacked {
  box-shadow: 4px 0 0 -1px rgba(255, 255, 255, 0.25);
}

.gid-icon {
  width: 32px;
  height: 32px;
  font-size: 16px;
  line-height: 30px;
}

.tray {
  display: flex;
  align-items: center;
  gap: 8px;
  margin: 0 4px 0 auto;
  color: #fff;
}

.clock {
  width: 80px;
  text-align: center;
}

.clock span {
  display: block;
  line-height: 17px;
}
</style>
